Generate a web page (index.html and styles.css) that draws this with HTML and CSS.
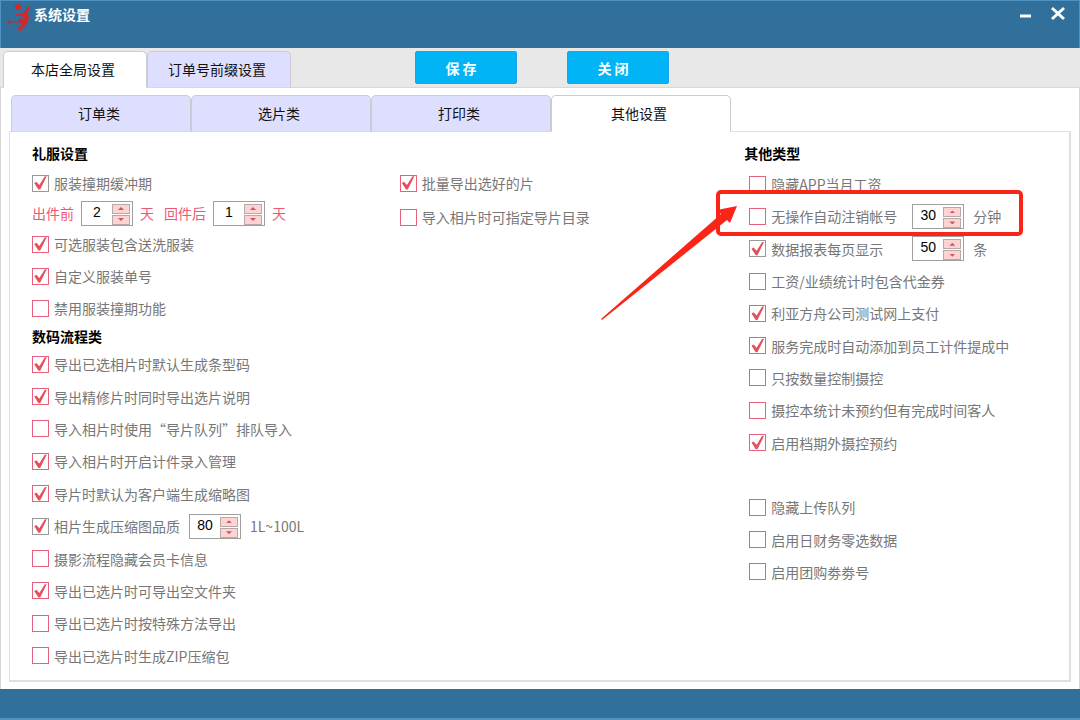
FILE: index.html
```html
<!DOCTYPE html>
<html lang="zh-CN">
  <head>
    <meta charset="utf-8">
    <title>系统设置</title>
    <link rel="stylesheet" href="styles.css">
  </head>
  <body>
    <header class="titlebar">
      <svg class="logo" width="28" height="28" viewBox="0 0 28 28">
        <circle cx="12" cy="3" r="3" fill="#d6262c"/>
        <path d="M9 9C13 11 16 11 19 7L23 2L25 3L21 9C24 12 23 17 20 21L14 27L11 26L16 20C12 18 12 15 14 14L18 16C19 14 17 12 14 12C12 12 9 11 9 9Z" fill="#d6262c"/>
        <path d="M0 18L3 17L2 20L6 17L6 19L9 17L10 19L14 17L17 19" fill="none" stroke="#b0303c"/>
      </svg>
      <h1>系统设置</h1>
      <button class="win-btn" aria-label="最小化">
        <svg width="16" height="16" viewBox="0 0 16 16"><path d="M3 11H14" stroke="#fff" stroke-width="3"/></svg>
      </button>
      <button class="win-btn" aria-label="关闭窗口">
        <svg width="16" height="16" viewBox="0 0 16 16"><path d="M3 3L15 14M15 3L3 14" stroke="#fff" stroke-width="3"/></svg>
      </button>
    </header>

    <div class="toolbar">
      <button class="tab active">本店全局设置</button>
      <button class="tab">订单号前缀设置</button>
      <div class="actions">
        <button class="action">保 存</button>
        <button class="action">关 闭</button>
      </div>
    </div>

    <main class="page">
      <nav class="subtabs">
        <button class="tab">订单类</button>
        <button class="tab">选片类</button>
        <button class="tab">打印类</button>
        <button class="tab active">其他设置</button>
      </nav>
      <div class="panel">
        <section class="col">
          <h2>礼服设置</h2>
          <div class="row"><input class="gray" type="checkbox" id="a1" checked><label for="a1">服装撞期缓冲期</label></div>
          <div class="row red">
            <label for="before">出件前</label>
            <span class="spin"><input type="number" id="before" value="2"><span class="arrows"><button class="up" aria-label="增加"></button><button class="down" aria-label="减少"></button></span></span>
            <span>天</span>
            <label class="after" for="after">回件后</label>
            <span class="spin"><input type="number" id="after" value="1"><span class="arrows"><button class="up" aria-label="增加"></button><button class="down" aria-label="减少"></button></span></span>
            <span>天</span>
          </div>
          <div class="row tall"><input type="checkbox" id="a2" checked><label for="a2">可选服装包含送洗服装</label></div>
          <div class="row tall"><input type="checkbox" id="a3" checked><label for="a3">自定义服装单号</label></div>
          <div class="row tall"><input type="checkbox" id="a4"><label for="a4">禁用服装撞期功能</label></div>
          <h2 class="second">数码流程类</h2>
          <div class="list">
            <div class="row"><input type="checkbox" id="b1" checked><label for="b1">导出已选相片时默认生成条型码</label></div>
            <div class="row"><input type="checkbox" id="b2" checked><label for="b2">导出精修片时同时导出选片说明</label></div>
            <div class="row"><input type="checkbox" id="b3"><label for="b3">导入相片时使用“导片队列”排队导入</label></div>
            <div class="row"><input type="checkbox" id="b4" checked><label for="b4">导入相片时开启计件录入管理</label></div>
            <div class="row"><input type="checkbox" id="b5" checked><label for="b5">导片时默认为客户端生成缩略图</label></div>
            <div class="row">
              <input class="gray" type="checkbox" id="b6" checked><label for="b6">相片生成压缩图品质</label>
              <span class="spin"><input type="number" value="80" aria-label="压缩图品质"><span class="arrows"><button class="up" aria-label="增加"></button><button class="down" aria-label="减少"></button></span></span>
              <span class="unit">1L~100L</span>
            </div>
            <div class="row"><input type="checkbox" id="b7"><label for="b7">摄影流程隐藏会员卡信息</label></div>
            <div class="row"><input type="checkbox" id="b8" checked><label for="b8">导出已选片时可导出空文件夹</label></div>
            <div class="row"><input type="checkbox" id="b9"><label for="b9">导出已选片时按特殊方法导出</label></div>
            <div class="row"><input type="checkbox" id="b10"><label for="b10">导出已选片时生成ZIP压缩包</label></div>
          </div>
        </section>

        <section class="col middle">
          <div class="row"><input type="checkbox" id="c1" checked><label for="c1">批量导出选好的片</label></div>
          <div class="row"><input type="checkbox" id="c2"><label for="c2">导入相片时可指定导片目录</label></div>
        </section>

        <section class="col other">
          <h2>其他类型</h2>
          <div class="list">
            <div class="row"><input type="checkbox" id="d1"><label for="d1">隐藏APP当月工资</label></div>
            <div class="row marked">
              <input type="checkbox" id="d2"><label class="wide" for="d2">无操作自动注销帐号</label>
              <span class="spin"><input type="number" value="30" aria-label="注销分钟"><span class="arrows"><button class="up" aria-label="增加"></button><button class="down" aria-label="减少"></button></span></span>
              <span class="unit">分钟</span>
              <svg class="pointer" width="136" height="114" viewBox="0 0 136 114"><path d="M0 113L120 8L116 4L136 0L129 17L126 14L1 114Z" fill="#fb2517"/></svg>
            </div>
            <div class="row">
              <input class="gray" type="checkbox" id="d3" checked><label class="wide" for="d3">数据报表每页显示</label>
              <span class="spin"><input type="number" value="50" aria-label="每页条数"><span class="arrows"><button class="up" aria-label="增加"></button><button class="down" aria-label="减少"></button></span></span>
              <span class="unit">条</span>
            </div>
            <div class="row"><input type="checkbox" id="d4"><label for="d4">工资/业绩统计时包含代金券</label></div>
            <div class="row"><input type="checkbox" id="d5" checked><label for="d5">利亚方舟公司测试网上支付</label></div>
            <div class="row"><input type="checkbox" id="d6" checked><label for="d6">服务完成时自动添加到员工计件提成中</label></div>
            <div class="row"><input type="checkbox" id="d7"><label for="d7">只按数量控制摄控</label></div>
            <div class="row"><input type="checkbox" id="d8"><label for="d8">摄控本统计未预约但有完成时间客人</label></div>
            <div class="row"><input type="checkbox" id="d9" checked><label for="d9">启用档期外摄控预约</label></div>
            <div class="row"></div>
            <div class="row"><input type="checkbox" id="d10"><label for="d10">隐藏上传队列</label></div>
            <div class="row"><input type="checkbox" id="d11"><label for="d11">启用日财务零选数据</label></div>
            <div class="row"><input type="checkbox" id="d12"><label for="d12">启用团购劵劵号</label></div>
          </div>
        </section>
      </div>
    </main>
    <footer class="statusbar"></footer>
    <script>
      document.querySelectorAll('.spin').forEach(function(spin) {
        const input = spin.querySelector('input');
        spin.querySelector('.up').onclick = () => input.stepUp();
        spin.querySelector('.down').onclick = () => input.stepDown();
      });
    </script>
  </body>
</html>
```

FILE: styles.css
```css
*, *::before, *::after {
  box-sizing: border-box;
}
body {
  display: flex;
  flex-direction: column;
  min-height: 100vh;
  margin: 0;
  background: #fff;
  color: #777;
  font: 14px/20px "Noto Sans CJK SC", "Liberation Sans", sans-serif;
}
button, input {
  margin: 0;
  padding: 0;
  font: inherit;
}
h1, h2 {
  margin: 0;
  font-size: 14px;
}

.titlebar {
  display: flex;
  align-items: flex-start;
  height: 48px;
  padding: 3px 11px 0 5px;
  background: #30709b;
  border: 1px solid #4d94c4;
  border-bottom: 0;
  color: #fff;
}
.titlebar h1 {
  flex: 1;
}
.win-btn {
  width: 22px;
  height: 22px;
  margin-left: 10px;
  background: none;
  border: 0;
}

.toolbar {
  display: flex;
  align-items: flex-end;
  height: 39px;
  padding-left: 3px;
  background: #e8e8e8;
}
.tab {
  height: 37px;
  padding: 0 4px 2px 0;
  background: #dedffe;
  border: 1px solid #cbcbd4;
  border-bottom-color: #d8d8d8;
  border-radius: 5px 5px 0 0;
  color: #111;
}
.tab.active {
  background: #fff;
  border-bottom-color: #fff;
}
.toolbar .tab {
  width: 144px;
  position: relative;
  z-index: 1;
}
.actions {
  display: flex;
  align-self: center;
  gap: 50px;
  margin-left: 124px;
}
.action {
  width: 102px;
  height: 33px;
  padding-right: 10px;
  background: #00b4f5;
  border: 1px solid #1ba5e8;
  border-radius: 2px;
  color: #fff;
  font-weight: bold;
}

.page {
  display: flex;
  flex: 1;
  flex-direction: column;
  padding: 7px 8px;
  border: 1px solid #d8d8d8;
  border-width: 1px 1px 0;
}
.toolbar .tab,
.subtabs .tab {
  margin-bottom: -1px;
}
.subtabs {
  display: flex;
  padding-left: 2px;
}
.subtabs .tab {
  width: 180px;
  z-index: 1;
}
.panel {
  display: grid;
  flex: 1;
  grid-template-columns: 368fr 345fr 325fr;
  padding: 6px 0 8px 22px;
  border: 2px solid #e0e0e0;
  border-width: 1px 2px 2px 1px;
}
.col {
  display: flex;
  flex-direction: column;
}
h2 {
  height: 30px;
  color: #000;
  line-height: 30px;
}
h2.second {
  height: 24px;
  line-height: 24px;
}
.middle {
  gap: 4px;
  padding-top: 30px;
}
.other {
  padding-bottom: 84px;
}
.other .list {
  padding-left: 5px;
}
.list {
  display: grid;
  flex: 1;
  grid-auto-rows: 1fr;
}

.row {
  display: flex;
  align-items: center;
  height: 30px;
  white-space: nowrap;
}
.row.tall {
  height: 32px;
}
.list .row {
  height: auto;
}
.red {
  gap: 7px;
  color: #ee5872;
}
.after {
  margin-left: 3px;
}
.unit {
  margin-left: 9px;
}
input[type=checkbox] {
  width: 17px;
  height: 17px;
  margin-right: 5px;
  appearance: none;
  background: #fff;
  border: 1px solid #e8607c;
}
input[type=checkbox].gray {
  border-color: #999;
}
input[type=checkbox]:checked::before {
  content: "";
  display: block;
  height: 15px;
  background: #e2525c;
  clip-path: polygon(8% 50%, 22% 42%, 42% 64%, 78% 6%, 92% 4%, 48% 94%, 36% 94%);
}

.spin {
  display: flex;
  width: 52px;
  height: 25px;
  background: #fff;
  border: 1px solid #a0a0a0;
  font-family: "Liberation Sans", sans-serif;
}
.list .spin {
  margin-left: 9px;
}
.spin input {
  flex: 1;
  width: 0;
  padding-bottom: 3px;
  appearance: textfield;
  background: none;
  border: 0;
  color: #000;
  text-align: center;
}
.spin input::-webkit-inner-spin-button {
  appearance: none;
}
.arrows {
  display: flex;
  flex-direction: column;
  gap: 1px;
  padding: 2px 2px 0 0;
}
.arrows button {
  width: 18px;
  height: 10px;
  background: #fcd4d4;
  border: 1px solid #b8a8a8;
}
.arrows button::before {
  content: "";
  display: block;
  width: 6px;
  height: 3px;
  margin: auto;
  background: #cf5560;
  clip-path: polygon(50% 0, 100% 100%, 0 100%);
}
.arrows .down::before {
  clip-path: polygon(0 0, 100% 0, 50% 100%);
}
.wide {
  min-width: 132px;
}

/* callout drawn over the neighbouring rows */
.marked {
  position: relative;
}
.marked::after {
  content: "";
  position: absolute;
  top: -10px;
  left: -33px;
  width: 307px;
  height: 46px;
  border: 4px solid #fb2517;
  border-radius: 5px;
  pointer-events: none;
  z-index: 1;
}
.pointer {
  position: absolute;
  top: 6px;
  left: -148px;
  pointer-events: none;
  z-index: 2;
}

.statusbar {
  height: 31px;
  background: #30709b;
  border-bottom: 2px solid #4d94c4;
}
```
